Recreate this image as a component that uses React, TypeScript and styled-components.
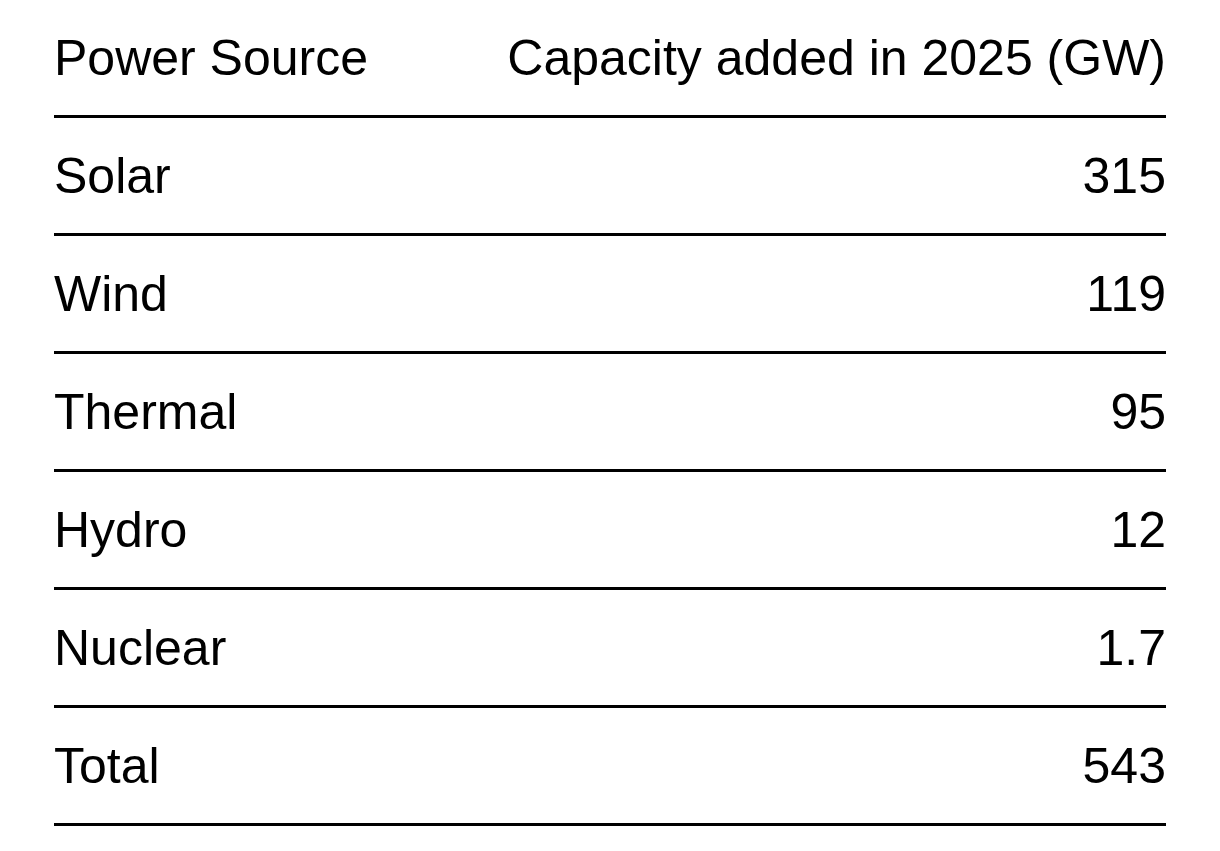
import styled, { createGlobalStyle } from "styled-components";

const GlobalStyle = createGlobalStyle`
  body {
    margin: 0;
    background: #ffffff;
    font-family: "Liberation Sans", Arial, Helvetica, sans-serif;
    color: #000000;
  }
`;

const Wrapper = styled.div`
  padding: 0 54px;
`;

const Table = styled.div`
  display: flex;
  flex-direction: column;
  width: 1112px;
`;

const Row = styled.div`
  display: flex;
  align-items: center;
  justify-content: space-between;
  height: 118px;
  box-sizing: border-box;
  border-bottom: 3px solid #000;
  font-size: 50px;
  line-height: 1;
`;

const Cell = styled.span<{ $align?: "left" | "right" }>`
  text-align: ${({ $align }) => $align ?? "left"};
  white-space: nowrap;
`;

const rows = [
  { source: "Solar", value: "315" },
  { source: "Wind", value: "119" },
  { source: "Thermal", value: "95" },
  { source: "Hydro", value: "12" },
  { source: "Nuclear", value: "1.7" },
  { source: "Total", value: "543" },
];

export default function App() {
  return (
    <>
      <GlobalStyle />
      <Wrapper>
        <Table>
          <Row>
            <Cell>Power Source</Cell>
            <Cell $align="right">Capacity added in 2025 (GW)</Cell>
          </Row>
          {rows.map((r) => (
            <Row key={r.source}>
              <Cell>{r.source}</Cell>
              <Cell $align="right">{r.value}</Cell>
            </Row>
          ))}
        </Table>
      </Wrapper>
    </>
  );
}
